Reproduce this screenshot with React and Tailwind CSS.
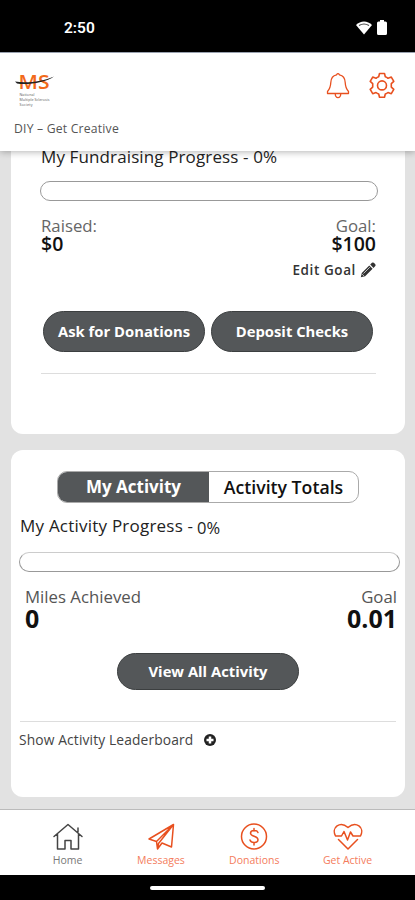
const NavItem = ({ label, active, children }) => (
  <a href="#" className={`w-[93.3px] flex flex-col items-center ${active ? 'text-[#444]' : 'text-[#e8501f]'}`}>
    <svg width="32" height="30" viewBox="0 0 32 30" fill="none" stroke="currentColor" strokeWidth="1.5" strokeLinejoin="round" strokeLinecap="round">
      {children}
    </svg>
    <span className={`text-[10.5px] leading-[16px] whitespace-nowrap ${active ? 'text-[#777]' : 'text-[#f47c5c]'}`}>{label}</span>
  </a>
);

const PillButton = ({ className, children }) => (
  <button className={`rounded-full bg-[#545759] border border-[#3c3f40] text-white font-bold text-[14.8px] whitespace-nowrap ${className}`}>
    {children}
  </button>
);

const StatusBar = () => (
  <div className="h-[52px] shrink-0 bg-black flex items-center justify-between pl-[64px] pr-[28px] pt-1 text-white">
    <span className="text-[15.5px] leading-5 font-semibold font-['Roboto',sans-serif]">2:50</span>
    <div className="flex items-center gap-[5px] -mt-px">
      <svg width="16" height="14" viewBox="0 0 16 14">
        <path d="M0 4C4.5-.8 11.5-.8 16 4L8 13.5Z" fill="#fff" />
        <path d="M3 4.4C6 2.7 10 2.7 13 4.4" fill="none" stroke="#444" strokeWidth="1.2" />
      </svg>
      <svg width="10" height="15" viewBox="0 0 10 15" fill="#fff">
        <path d="M3 0h4v1.5h1.5q1.5 0 1.5 1.5v10.5q0 1.5-1.5 1.5h-7Q0 15 0 13.5V3Q0 1.5 1.5 1.5H3Z" />
      </svg>
    </div>
  </div>
);

const Logo = () => (
  <svg width="42" height="38" viewBox="0 0 42 38">
    <text x="4.5" y="17.5" fontFamily="Open Sans" fontSize="20" fontWeight="600" fill="#f26a1b" textLength="31" lengthAdjust="spacingAndGlyphs">MS</text>
    <path d="M1 10.5C12 12.5 29 10.500 40 5.500C32 11.500 13 14.500 3 12.500Z" fill="#222" />
    <g fontFamily="Open Sans" fontSize="3.6" fill="#555">
      <text x="5.5" y="25.2" textLength="15">National</text>
      <text x="5.5" y="30.1" textLength="30">Multiple Sclerosis</text>
      <text x="5.5" y="35" textLength="13">Society</text>
    </g>
  </svg>
);

const Header = () => (
  <header className="relative z-10 h-[99px] shrink-0 bg-white border-t border-gray-400 shadow-[0_1px_7px_rgba(0,0,0,0.3)] pl-[14px] pr-[19px]">
    <div className="flex justify-between pt-[18px] h-[66px]">
      <Logo />
      <div className="flex gap-[18px] text-[#e8501f]">
        <svg width="24" height="28" viewBox="0 0 24 28" fill="none" stroke="currentColor" strokeWidth="1.3" strokeLinejoin="round">
          <path d="M10.5 3.8Q12 1.5 13.5 3.8C17.5 4.5 19 7.5 19.2 11.5C19.4 16 20.2 18 22.5 20.5V22.5H1.5V20.5C3.8 18 4.6 16 4.8 11.5C5 7.5 6.5 4.5 10.5 3.8ZM9.2 22.7C9.5 27.8 14.5 27.8 14.8 22.7" />
        </svg>
        <svg width="28" height="28" viewBox="0 0 28 28" fill="none" stroke="currentColor" strokeWidth="1.6" strokeLinejoin="round">
          <path d="M11.5 2.5h5l.8 3.3q1.5.5 2.7 1.5l3.3-1.2 2.5 4.3-2.5 2.3v3.4l2.5 2.3-2.500 4.3-3.3-1.2q-1.2 1-2.700 1.5l-.8 3.3h-5l-.8-3.3q-1.5-.5-2.7-1.5l-3.3 1.2-2.5-4.3 2.5-2.3v-3.4l-2.5-2.3 2.5-4.3 3.3 1.2q1.2-1 2.7-1.5z" />
          <circle cx="14" cy="14.4" r="4.5" />
        </svg>
      </div>
    </div>
    <p className="text-[12.2px] leading-5 tracking-[0.2px] text-[#555]">DIY – Get Creative</p>
  </header>
);

const PencilIcon = () => (
  <svg width="16" height="16" viewBox="0 0 16 16" fill="#333">
    <path d="M12 .8q.9-.7 1.800 0l1.500 1.500q.7.900 0 1.800L13.500 5.900 10.200 2.600ZM9.300 3.500l3.300 3.300-7.500 7.500L.8 15.300l1-4.300Z" />
    <path d="M3.500 11.500l6.300-6.300M2.200 12.200l1.700 1.700" stroke="#fff" strokeWidth=".7" />
  </svg>
);

const FundraisingCard = () => (
  <section className="h-[283px] shrink-0 bg-white rounded-b-xl px-[29px]">
    <h2 className="-mt-[6px] h-6 leading-6 pl-px text-[17px] tracking-[0.12px] font-medium text-[#222] whitespace-nowrap">My Fundraising Progress - 0%</h2>
    <div className="mt-3 h-5 w-[338px] rounded-full border border-[#999]" />
    <div className="mt-4 pl-px flex justify-between">
      <div>
        <p className="text-[16.8px] leading-[18px] text-[#666]">Raised:</p>
        <p className="text-[19.5px] leading-[18px] font-semibold text-[#111]">$0</p>
      </div>
      <div className="text-right">
        <p className="text-[16.8px] leading-[18px] text-[#666]">Goal:</p>
        <p className="text-[19.5px] leading-[18px] font-semibold text-[#111]">$100</p>
      </div>
    </div>
    <a href="#" className="mt-[7px] h-5 flex items-center justify-end gap-1 text-[13.5px] tracking-[0.6px] font-semibold text-[#333]">
      Edit Goal <PencilIcon />
    </a>
    <div className="mt-[31px] pl-[3px] flex gap-[6px]">
      <PillButton className="w-[162px] h-[41px]">Ask for Donations</PillButton>
      <PillButton className="w-[162px] h-[41px]">Deposit Checks</PillButton>
    </div>
    <hr className="mt-[21px] ml-px w-[335px] border-[#ddd]" />
  </section>
);

const ActivityCard = () => (
  <section className="h-[347px] shrink-0 bg-white rounded-xl px-2 pt-[21px]">
    <div className="mx-auto w-[302px] h-8 flex rounded-[10px] border border-[#aaa] overflow-hidden text-[17px] font-semibold">
      <button className="w-[151px] bg-[#545759] text-white font-bold">My Activity</button>
      <button className="flex-1 text-[17.7px] text-[#111] whitespace-nowrap">Activity Totals</button>
    </div>
    <h2 className="mt-[11px] h-6 leading-6 pl-px text-[17px] tracking-[0.22px] font-medium text-[#222] whitespace-nowrap">
      My Activity Progress - <span className="inline-block -ml-px translate-y-[2px] text-[16.5px]">0%</span>
    </h2>
    <div className="mt-[14px] h-5 w-[381px] rounded-full border border-[#999] border-t-[#ccc]" />
    <div className="mt-4 pl-[6px] flex justify-between">
      <div>
        <p className="text-[16.8px] leading-[18px] text-[#555]">Miles Achieved</p>
        <p className="text-[25px] leading-6 font-bold text-[#111]">0</p>
      </div>
      <div className="text-right">
        <p className="text-[16.8px] leading-[18px] text-[#555]">Goal</p>
        <p className="text-[25px] leading-6 font-bold text-[#111]">0.01</p>
      </div>
    </div>
    <PillButton className="block mt-[23px] mx-auto w-[182px] h-[37px]">View All Activity</PillButton>
    <hr className="mt-[31px] ml-px w-[376px] border-[#ddd]" />
    <button className="mt-2 h-5 flex items-center gap-[11px] text-[13.8px] tracking-[0.13px] text-[#444] whitespace-nowrap">
      Show Activity Leaderboard
      <svg width="12" height="12" viewBox="0 0 12 12">
        <circle cx="6" cy="6" r="6" fill="#222" />
        <path d="M6 2.5v7M2.5 6h7" stroke="#fff" strokeWidth="2.5" />
      </svg>
    </button>
  </section>
);

export default function App() {
  return (
    <div className="w-[415px] h-[900px] overflow-hidden flex flex-col bg-[#e2e2e2] font-['Open_Sans',sans-serif]">
      <StatusBar />
      <Header />

      <main className="flex-1 min-h-0 pl-[11px] pr-[10px] flex flex-col gap-4">
        <FundraisingCard />
        <ActivityCard />
      </main>

      {/* Bottom nav */}
      <nav className="h-[66px] shrink-0 bg-white border-t border-[#bbb] pt-[12px] pl-[21px] flex">
        <NavItem label="Home" active>
          <path d="M2 14.5L16 2.5L30 14.5M5.5 12.5V27H13V18.5H19V27H26.5V12.5M26 10V6" />
        </NavItem>
        <NavItem label="Messages">
          <path d="M4 17L28.5 2.5L26.5 25L17 21L12.5 27L11.5 19.5ZM11.5 19.5L28.5 2.5L13.5 21.500L12.500 27" />
        </NavItem>
        <NavItem label="Donations">
          <circle cx="16" cy="14.5" r="12.5" />
          <path d="M20 10.5C19 7.8 12.5 7.8 12.5 11.3C12.5 15 20 13.5 20 17.7C20 21.2 13 21.5 12 18M16 6.5V9M16 20.5V23" />
        </NavItem>
        <NavItem label="Get Active">
          <path d="M3.5 14C-1 5.5 8-1.5 16 5.5C24-1.5 33 5.5 28.5 14H21L18.5 10L15.5 18L12 9.5L9.5 14H3.5M6.5 17.5L16 27L25.5 17.5" />
        </NavItem>
      </nav>
      <div className="h-[25px] shrink-0 bg-black flex justify-center items-center">
        <div className="w-[115px] h-1 rounded-full bg-white" />
      </div>
    </div>
  );
}
